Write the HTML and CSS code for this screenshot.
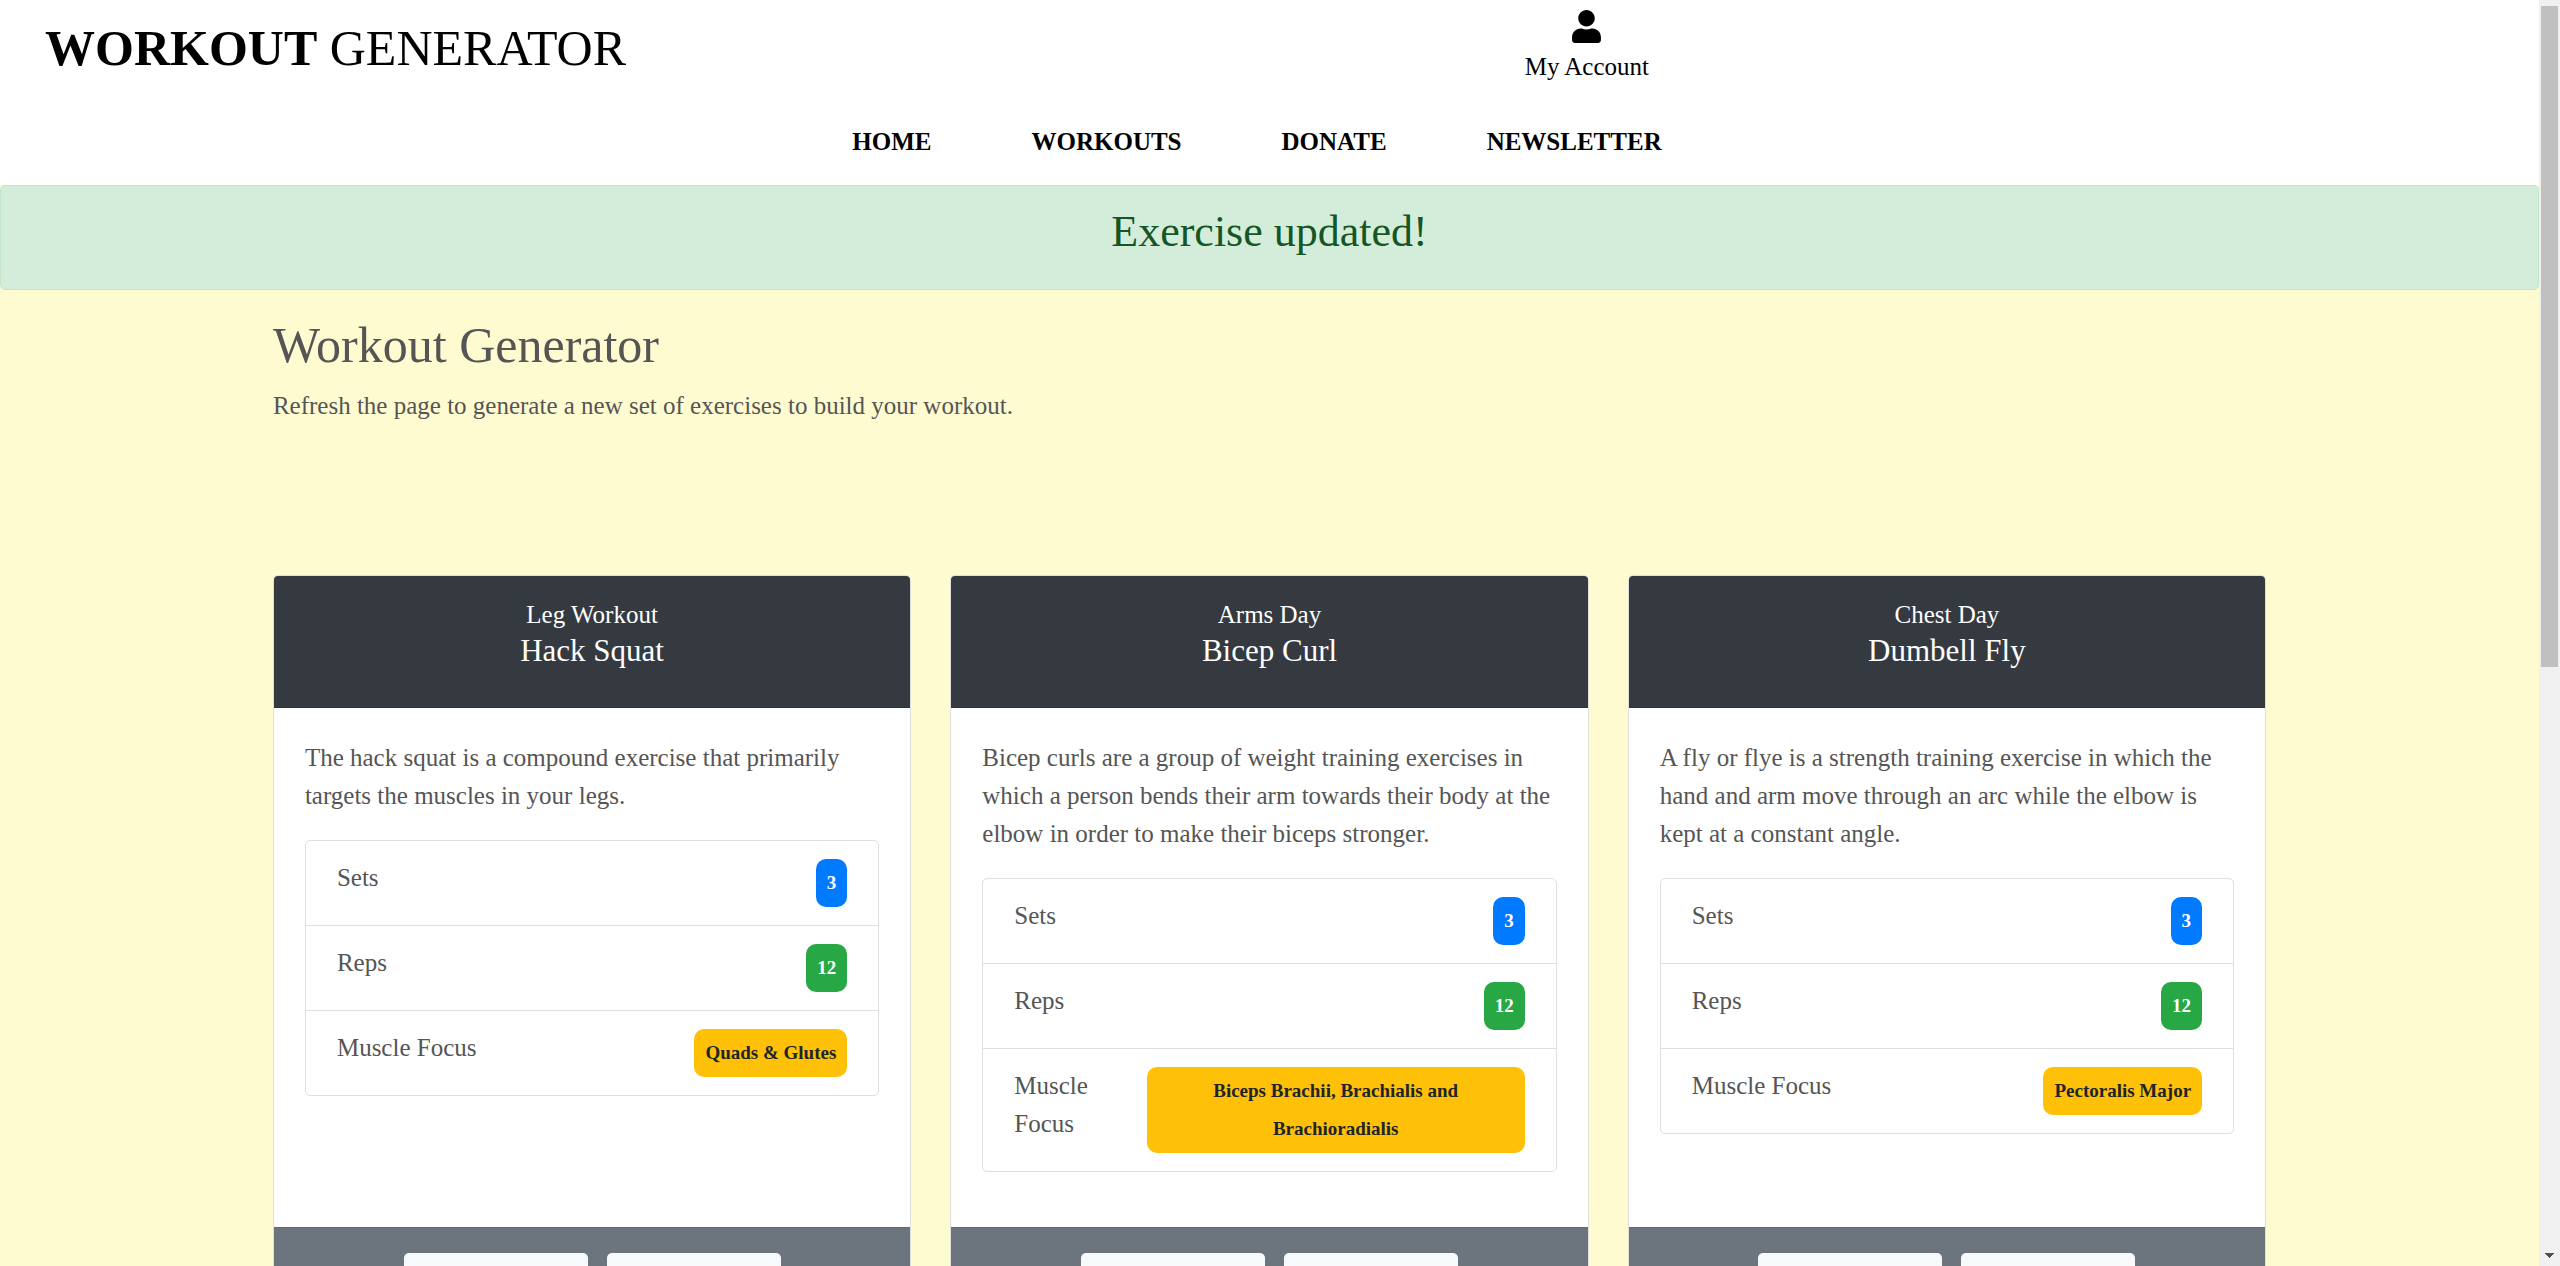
FILE: index.html
```html
<!DOCTYPE html>
<html lang="en">
<head>
<meta charset="utf-8">
<meta name="viewport" content="width=device-width, initial-scale=1">
<title>Workout Generator</title>
<link rel="stylesheet" href="styles.css">
</head>
<body>
<div class="page">
  <header class="site-header">
    <div class="top-row">
      <a class="logo" href="#"><strong>WORKOUT</strong> GENERATOR</a>
      <a class="account" href="#">
        <svg class="account-icon" viewBox="0 0 448 512" aria-hidden="true"><path fill="currentColor" d="M224 256c70.7 0 128-57.3 128-128S294.7 0 224 0 96 57.3 96 128s57.3 128 128 128zm89.6 32h-16.7c-22.2 10.2-46.9 16-72.9 16s-50.6-5.8-72.9-16h-16.7C60.2 288 0 348.2 0 422.4V464c0 26.500 21.500 48 48 48h352c26.500 0 48-21.500 48-48v-41.600c0-74.200-60.200-134.400-134.400-134.400z"/></svg>
        <span>My Account</span>
      </a>
    </div>
    <nav class="main-nav">
      <a href="#">HOME</a>
      <a href="#">WORKOUTS</a>
      <a href="#">DONATE</a>
      <a href="#">NEWSLETTER</a>
    </nav>
  </header>

  <div class="alert" role="alert">Exercise updated!</div>

  <main class="container">
    <h1>Workout Generator</h1>
    <p class="intro">Refresh the page to generate a new set of exercises to build your workout.</p>

    <div class="cards">
      <article class="card">
        <header class="card-header">
          <p class="card-category">Leg Workout</p>
          <h2>Hack Squat</h2>
        </header>
        <div class="card-body">
          <p>The hack squat is a compound exercise that primarily targets the muscles in your legs.</p>
          <ul class="stats">
            <li><span>Sets</span><span class="badge badge-sets">3</span></li>
            <li><span>Reps</span><span class="badge badge-reps">12</span></li>
            <li><span>Muscle Focus</span><span class="badge badge-focus">Quads &amp; Glutes</span></li>
          </ul>
        </div>
        <footer class="card-footer">
          <button class="btn btn-wide" type="button" aria-label="Update"></button>
          <button class="btn" type="button" aria-label="Delete"></button>
        </footer>
      </article>

      <article class="card">
        <header class="card-header">
          <p class="card-category">Arms Day</p>
          <h2>Bicep Curl</h2>
        </header>
        <div class="card-body">
          <p>Bicep curls are a group of weight training exercises in which a person bends their arm towards their body at the elbow in order to make their biceps stronger.</p>
          <ul class="stats">
            <li><span>Sets</span><span class="badge badge-sets">3</span></li>
            <li><span>Reps</span><span class="badge badge-reps">12</span></li>
            <li><span>Muscle Focus</span><span class="badge badge-focus">Biceps Brachii, Brachialis and Brachioradialis</span></li>
          </ul>
        </div>
        <footer class="card-footer">
          <button class="btn btn-wide" type="button" aria-label="Update"></button>
          <button class="btn" type="button" aria-label="Delete"></button>
        </footer>
      </article>

      <article class="card">
        <header class="card-header">
          <p class="card-category">Chest Day</p>
          <h2>Dumbell Fly</h2>
        </header>
        <div class="card-body">
          <p>A fly or flye is a strength training exercise in which the hand and arm move through an arc while the elbow is kept at a constant angle.</p>
          <ul class="stats">
            <li><span>Sets</span><span class="badge badge-sets">3</span></li>
            <li><span>Reps</span><span class="badge badge-reps">12</span></li>
            <li><span>Muscle Focus</span><span class="badge badge-focus">Pectoralis Major</span></li>
          </ul>
        </div>
        <footer class="card-footer">
          <button class="btn btn-wide" type="button" aria-label="Update"></button>
          <button class="btn" type="button" aria-label="Delete"></button>
        </footer>
      </article>
    </div>
  </main>
</div>
<div class="scrollbar" aria-hidden="true">
  <div class="scroll-track"><div class="scroll-thumb"></div></div>
  <svg class="scroll-arrow" viewBox="0 0 9 5"><path fill="#505050" d="M0 0h9v1H8v1H7v1H6v1H5v1H4V4H3V3H2V2H1V1H0z"/></svg>
</div>
</body>
</html>
```
FILE: styles.css
```css
* {
  box-sizing: border-box;
}

body {
  margin: 0;
  height: 100vh;
  display: flex;
  background: #fffbd0;
  color: #555;
  font-family: "Liberation Serif", "Times New Roman", serif;
  font-size: 25px;
  line-height: 37px;
}

h1,
h2,
p,
ul {
  margin: 0;
  font-weight: 400;
}

a {
  color: #000;
  text-decoration: none;
}

.page {
  flex: 1;
  min-width: 0;
  overflow-y: auto;
  scrollbar-width: none;
}

/* Header */

.site-header {
  background: #fff;
  padding-bottom: 25px;
}

.top-row {
  display: grid;
  grid-template-columns: 2fr 1fr 1fr;
  align-items: start;
  padding-top: 10px;
}

.logo {
  padding: 9px 0 0 45px;
  font-size: 50px;
  line-height: 59px;
}

.account {
  display: flex;
  flex-direction: column;
  align-items: center;
  gap: 5px;
}

.account-icon {
  width: 29px;
  height: 33px;
}

.main-nav {
  display: flex;
  justify-content: center;
  gap: 100px;
  padding: 38px 25px 0 0;
  font-weight: 700;
}

/* Alert */

.alert {
  padding: 20px 25px 31px;
  border: 1px solid #c3e6cb;
  border-radius: 5px;
  background: #d4edda;
  color: #155724;
  font-size: 44px;
  line-height: 52px;
  text-align: center;
}

/* Content */

.container {
  width: 80%;
  margin: 0 auto;
  padding: 26px 19px;
}

h1 {
  margin-bottom: 12px;
  font-size: 50px;
  line-height: 59px;
}

.cards {
  display: grid;
  grid-template-columns: repeat(3, 1fr);
  gap: 39px;
  margin-top: 151px;
}

.card {
  display: flex;
  flex-direction: column;
  overflow: hidden;
  border: 1px solid #dfdfdf;
  border-radius: 5px;
  background: #fff;
}

.card-header {
  padding: 20px 26px 39px;
  border-bottom: 1px solid #2e3338;
  background: #343a40;
  color: #fff;
  text-align: center;
}

h2 {
  font-size: 31px;
  line-height: 35px;
}

.card-body {
  flex: 1;
  padding: 31px;
  line-height: 38px;
}

.stats {
  margin: 25px 0 24px;
  padding: 0;
  border: 1px solid #dfdfdf;
  border-radius: 5px;
  list-style: none;
}

.stats li {
  display: flex;
  justify-content: space-between;
  align-items: flex-start;
  padding: 18px 31px;
}

.stats li + li {
  border-top: 1px solid #dfdfdf;
}

.badge {
  padding: 5px 11px;
  border-radius: 10px;
  font-size: 19px;
  font-weight: 700;
  text-align: center;
}

.badge-sets {
  background: #007bff;
  color: #fff;
}

.badge-reps {
  background: #28a745;
  color: #fff;
}

.badge-focus {
  background: #ffc107;
  color: #212529;
}

.card-footer {
  display: flex;
  justify-content: center;
  gap: 19px;
  padding: 25px;
  border-top: 1px solid #616970;
  background: #6c757d;
}

.btn {
  min-width: 174px;
  min-height: 56px;
  border: 0;
  border-radius: 5px;
  background: #f8f9fa;
  color: #212529;
  font: inherit;
}

.btn-wide {
  min-width: 184px;
}

/* Scrollbar */

.scrollbar {
  display: flex;
  flex-direction: column;
  align-items: center;
  width: 21px;
  padding: 6px 0 8px;
  background: #f0f0f0;
}

.scroll-track {
  flex: 1;
}

.scroll-thumb {
  width: 17px;
  height: 53%;
  background: #c0c0c0;
}

.scroll-arrow {
  width: 9px;
  height: 5px;
}
```
